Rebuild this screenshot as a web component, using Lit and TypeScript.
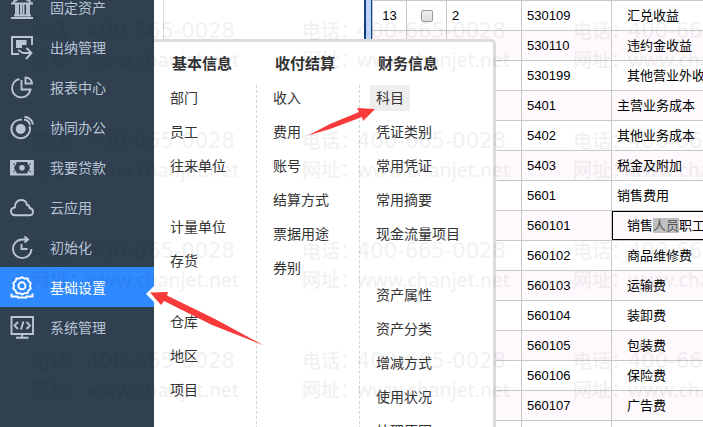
import { LitElement, html, svg, css } from "lit";
import { customElement } from "lit/decorators.js";
import { classMap } from "lit/directives/class-map.js";

const icons = {
  bank: svg`<path d="M1 7.500H23M3 6L12 1L21 6M6 8V20M8 8V20M11 8V20M13.500 8V20M17 8V20M19 8V20M4 19.500H21M1 22H23"/>`,
  cashier: svg`<path d="M9 18H2V1H22V9M8 14L13 17H21M16.500 12L21.500 17L16 23"/><path class="solid" d="M6 4H16.500V9H12V12H6Z"/>`,
  pie: svg`<path d="M9.500 3A9.300 9.300 0 1 0 20.500 13.500H11.500V4"/><path d="M15.500 1.500V7.500H22C22 4 19 1.500 15.500 1.500Z"/>`,
  office: svg`<path d="M12 3.700A9.300 9.300 0 1 0 19.500 10M14 3.500C17 4 19.500 6.500 20 9M14.500 .8C19 1.200 22.500 4.500 23 8.500"/><circle class="solid" cx="10.700" cy="13" r="5"/>`,
  money: svg`<path d="M1 5H23V18.500H1Z"/><path class="solid" d="M1 5H7C7 8 4.500 9.500 4 11.700C4.500 14 7 15.500 7 18.500H1ZM23 5H17C17 8 19.500 9.500 20 11.700C19.500 14 17 15.500 17 18.500H23Z"/><circle class="solid" cx="12" cy="11.700" r="2.800"/><path class="cut" d="M3 7.500L5 9M3 16L5 14.500M21 7.500L19 9M21 16L19 14.500"/>`,
  cloud: svg`<path d="M5.500 19.300C2.500 19.300 1 17.500 1 15.300C1 13 2.800 11.700 5 11.300C4.500 7 7.500 4 11 4C14.500 4 16.500 6 17 9C19 9 19.500 10.300 19.500 12C21.500 12.300 23 13.500 23 15.700C23 18 21.500 19.300 19 19.300Z"/>`,
  reset: svg`<path d="M21.500 13A9.300 9.300 0 1 1 12 3.500H18M14.500 .5L18 3.500L14.500 6.500M11.500 8V13H17.500"/>`,
  gear: svg`<path d="M12 1L14.500 2.500L17.500 2.500L18.500 5.200L20.700 7L20 9.800L20.700 12.500L18.500 14.500L17.500 17L14.500 17.200L12 18.500L9.500 17.200L6.500 17L5.500 14.500L3.300 12.500L4 9.800L3.300 7L5.500 5.200L6.500 2.500L9.500 2.500Z"/><circle cx="12" cy="9.800" r="3.500"/><path d="M1.500 17.500V20.500H8M16 20.500H22.500V17.500M7 21.500H17"/>`,
  monitor: svg`<path d="M1.500 1H23V18H1.500ZM12.200 18V21.500M6 21.800H18.500M8 6L4.500 9.500L8 13M16.500 6L20 9.500L16.500 13M13.500 5.500L11 13.500"/>`,
};

const navItems: { label: string; icon: keyof typeof icons; active?: boolean }[] = [
  { label: "固定资产", icon: "bank" },
  { label: "出纳管理", icon: "cashier" },
  { label: "报表中心", icon: "pie" },
  { label: "协同办公", icon: "office" },
  { label: "我要贷款", icon: "money" },
  { label: "云应用", icon: "cloud" },
  { label: "初始化", icon: "reset" },
  { label: "基础设置", icon: "gear", active: true },
  { label: "系统管理", icon: "monitor" },
];

const menu = [
  { title: "基本信息", groups: [["部门", "员工", "往来单位"], ["计量单位", "存货"], ["仓库", "地区", "项目"]] },
  { title: "收付结算", groups: [["收入", "费用", "账号", "结算方式", "票据用途", "券别"]] },
  {
    title: "财务信息",
    groups: [
      ["科目", "凭证类别", "常用凭证", "常用摘要", "现金流量项目"],
      ["资产属性", "资产分类", "增减方式", "使用状况", "处理原因"],
    ],
  },
];

const accounts: { code: string; name: string; level: number }[] = [
  { code: "530109", name: "汇兑收益", level: 2 },
  { code: "530110", name: "违约金收益", level: 2 },
  { code: "530199", name: "其他营业外收入", level: 2 },
  { code: "5401", name: "主营业务成本", level: 1 },
  { code: "5402", name: "其他业务成本", level: 1 },
  { code: "5403", name: "税金及附加", level: 1 },
  { code: "5601", name: "销售费用", level: 1 },
  { code: "560101", name: "销售人员职工薪酬", level: 2 },
  { code: "560102", name: "商品维修费", level: 2 },
  { code: "560103", name: "运输费", level: 2 },
  { code: "560104", name: "装卸费", level: 2 },
  { code: "560105", name: "包装费", level: 2 },
  { code: "560106", name: "保险费", level: 2 },
  { code: "560107", name: "广告费", level: 2 },
  { code: "", name: "", level: 1 },
];

@customElement("side-nav")
class SideNav extends LitElement {
  static styles = css`
    :host { display: block; background: #304050; overflow: hidden; }
    .list { list-style: none; margin: -13px 0 0; padding: 0; }
    .link {
      position: relative; display: flex; align-items: center; gap: 16px; height: 38px;
      padding: 2px 0 0 10px; color: #b9c5d6; font-size: 14px; line-height: 20px; text-decoration: none;
    }
    .active { background: #2f89ff; color: #fff; }
    .active::after {
      content: ""; position: absolute; right: 0; top: 19px;
      border: 8px solid transparent; border-left-width: 0; border-right-color: #fff;
    }
    .icon { width: 24px; height: 24px; fill: none; stroke: currentColor; stroke-width: 1.9; overflow: visible; }
    .solid { fill: currentColor; stroke: none; }
    .cut { stroke: #304050; stroke-width: 1; }
  `;
  render() {
    return html`<nav><ul class="list">
      ${navItems.map((n) => html`<li><a href="#" class=${classMap({ link: true, active: !!n.active })}>
        <svg class="icon" viewBox="0 0 24 24" aria-hidden="true">${icons[n.icon]}</svg><span>${n.label}</span></a></li>`)}
    </ul></nav>`;
  }
}

@customElement("settings-menu")
class SettingsMenu extends LitElement {
  static styles = css`
    :host {
      display: grid; grid-template-columns: 103px 103px 133px; background: #fff;
      border: solid #dcdcdc; border-width: 3px 3px 0 0; border-top-right-radius: 5px;
    }
    .column { display: flex; flex-direction: column; }
    .title { margin: 0; padding-left: 18px; font-size: 15px; line-height: 43px; font-weight: 700; color: #333; }
    .body { flex: 1; padding-left: 10px; border-right: 1px dashed #d4d4d4; }
    .column:last-child .body { border-right: 0; }
    .group { list-style: none; margin: 0 0 27px; padding: 0; }
    .item { height: 34px; }
    .link {
      display: inline-block; padding: 0 6px; font-size: 14px; line-height: 26px;
      white-space: nowrap; color: #333; text-decoration: none;
    }
    .current { background: #eee; }
  `;
  render() {
    return menu.map((c) => html`<section class="column"><h2 class="title">${c.title}</h2><div class="body">
      ${c.groups.map((g) => html`<ul class="group">${g.map((t) => html`<li class="item"><a href="#"
        class=${classMap({ link: true, current: t === "科目" })}>${t}</a></li>`)}</ul>`)}
    </div></section>`);
  }
}

@customElement("account-table")
class AccountTable extends LitElement {
  static styles = css`
    :host { display: block; overflow: hidden; }
    .table { width: 100%; table-layout: fixed; border-collapse: separate; border-spacing: 0; font-size: 13px; line-height: 20px; color: #000; }
    .c-index { width: 34px; } .c-check { width: 40px; } .c-level { width: 75px; } .c-code { width: 90px; }
    .cell { height: 29px; padding: 0 0 0 5px; border-top: 1px solid #c8c8c8; border-left: 1px solid #c8c8c8; white-space: nowrap; overflow: hidden; }
    .row:nth-child(even) { background: #fef9fd; }
    .mid { padding: 0; text-align: center; }
    .sub { padding-left: 15px; }
    .editing { box-shadow: inset 2px 2px 0 -1px #000, inset 0 -1px 0 #000; }
    .marked { background: #c0c0c0; color: #555; }
    .check {
      appearance: none; display: block; width: 12px; height: 12px; margin: 0 auto;
      border: 1px solid #999; border-radius: 2px; background: linear-gradient(#eee, #ddd);
    }
  `;
  render() {
    return html`<table class="table">
      <colgroup><col class="c-index"><col class="c-check"><col class="c-level"><col class="c-code"><col></colgroup>
      <tbody>${accounts.map((a, i) => html`<tr class="row">
        <td class="cell mid">${i === 0 ? "13" : ""}</td>
        <td class="cell mid">${i === 0 ? html`<input class="check" type="checkbox" aria-label="选择 13">` : ""}</td>
        <td class="cell">${i === 0 ? "2" : ""}</td>
        <td class="cell">${a.code}</td>
        <td class=${classMap({ cell: true, sub: a.level > 1, editing: a.code === "560101" })}>${
          a.code === "560101" ? html`销售<span class="marked">人员</span>职工薪酬` : a.name}</td>
      </tr>`)}</tbody></table>`;
  }
}

@customElement("app-root")
class AppRoot extends LitElement {
  static styles = css`
    :host {
      position: relative; display: grid; grid-template-columns: 154px 9px 201px 8px 1fr; height: 100vh;
      overflow: hidden; background: #fff; font-family: "Liberation Sans", "Noto Sans CJK SC", sans-serif;
    }
    side-nav, account-table { min-width: 0; min-height: 0; }
    .pane { border-left: 1px solid #ddd; }
    .splitter { box-sizing: border-box; background: #bcd5fa; border: solid #123f87; border-width: 0 1px 0 2px; }
    settings-menu { position: absolute; left: 154px; top: 39px; bottom: 0; }
    .arrows { position: absolute; left: 0; top: 0; width: 703px; height: 427px; fill: #f83a3a; pointer-events: none; }
    .marks {
      position: absolute; left: 31px; top: 17px; display: grid; grid-template-columns: repeat(3, 271px);
      grid-auto-rows: 110px; pointer-events: none; color: #000; opacity: .05;
      font-family: "Noto Sans", "Noto Sans CJK SC", sans-serif; font-size: 19px; font-weight: 500;
      line-height: 29px; white-space: nowrap;
    }
    .line { margin: 0; display: flex; }
    .label { width: 55px; }
    .phone { font-family: "DejaVu Sans", sans-serif; font-size: 21px; }
  `;
  render() {
    return html`
      <side-nav></side-nav>
      <div></div>
      <div class="pane"></div>
      <div class="splitter"></div>
      <account-table></account-table>
      <settings-menu></settings-menu>
      <div class="marks" aria-hidden="true">
        ${Array.from({ length: 12 }, () => html`<div>
          <p class="line"><span class="label">电话：</span><span class="phone">400-665-0028</span></p>
          <p class="line"><span class="label">网址：</span><span>www.chanjet.net</span></p></div>`)}
      </div>
      <svg class="arrows" viewBox="0 0 703 427" aria-hidden="true">
        <path d="M375 109L357 108L359 112L330 124L308 135.500L330 129L362 117L363 121Z"/>
        <path d="M150 292.500L168 292L167 295.500L215 319L264 345.500L212 325L164 301L161 305Z"/>
      </svg>`;
  }
}
